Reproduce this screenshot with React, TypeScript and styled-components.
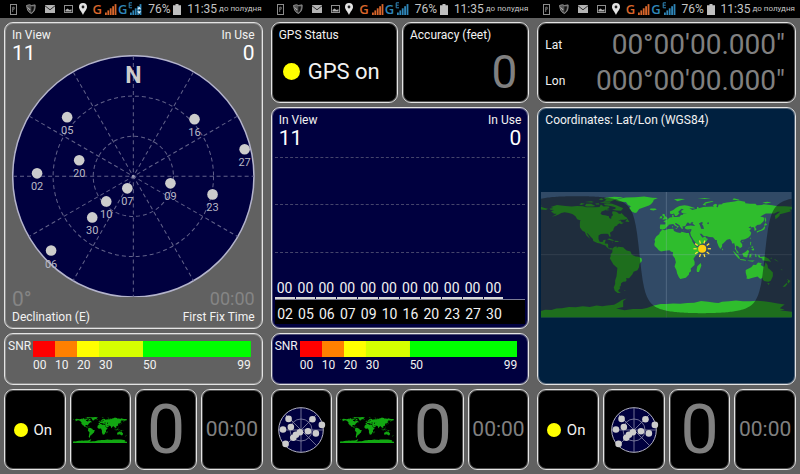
import React from "react";
import styled, { createGlobalStyle, css } from "styled-components";

const GlobalStyle = createGlobalStyle`
  *, *::before, *::after { box-sizing: border-box; }
  body { margin: 0; background: #616161; font-family: Roboto, "Noto Sans", sans-serif; color: #f2f2f2; }
`;

/* ---------- layout ---------- */

const Screens = styled.main`
  display: grid;
  grid-template-columns: repeat(3, minmax(0, 1fr));
  min-height: 100vh;
`;

const Phone = styled.section`
  display: flex;
  flex-direction: column;
  background: #616161;
`;

const Body = styled.div`
  flex: 1;
  display: flex;
  flex-direction: column;
  gap: 4px;
  padding: 4px;
`;

const frame = css`
  border: 1px solid #e4e4e4;
  border-radius: 9px;
  box-shadow: inset 0 0 0 1px rgba(220, 220, 220, 0.35);
`;

const Card = styled.div<{ $bg?: string }>`
  ${frame}
  background: ${(p) => p.$bg ?? "#000"};
  font-size: 12px;
  line-height: 14px;
`;

const Halves = styled.div`
  display: grid;
  grid-template-columns: repeat(2, minmax(0, 1fr));
  gap: 4px;
`;

const Tiles = styled.nav`
  display: grid;
  grid-template-columns: repeat(4, minmax(0, 1fr));
  gap: 4px;
`;

const Tile = styled.button`
  ${frame}
  display: flex;
  align-items: center;
  justify-content: center;
  gap: 6px;
  height: 81px;
  padding: 0;
  background: #000;
  color: #f2f2f2;
  font-family: inherit;
  font-size: 15px;
`;

const SwitchTile = styled(Tile)`
  padding-right: 4px;
`;

const Reading = styled.span<{ $size: number }>`
  color: #808080;
  font-size: ${(p) => p.$size}px;
  line-height: 1;
`;

const Dot = styled.span<{ $size: number }>`
  width: ${(p) => p.$size}px;
  height: ${(p) => p.$size}px;
  border-radius: 50%;
  background: #ffff00;
`;

/* ---------- status bar ---------- */

const StatusRow = styled.header`
  display: flex;
  align-items: center;
  justify-content: space-between;
  height: 18px;
  padding: 0 5px 0 10px;
  background: #000;
  color: #c4c4c4;
  font-size: 12px;
  line-height: 18px;
  white-space: nowrap;
`;

const Cluster = styled.div<{ $gap: number }>`
  display: flex;
  align-items: center;
  gap: ${(p) => p.$gap}px;
`;

const Carrier = styled.span<{ $color: string }>`
  color: ${(p) => p.$color};
  font-family: "Open Sans", sans-serif;
  font-size: 13px;
  font-weight: 600;
`;

const Meridiem = styled.span`
  font-size: 8px;
  line-height: 22px;
`;

function Signal({ color, edge, data }: { color: string; edge?: boolean; data?: boolean }) {
  return (
    <svg width="14" height="14" viewBox="0 0 14 14" aria-hidden="true">
      {[0, 1, 2, 3, 4].map((i) => (
        <rect key={i} x={2 + i * 2.4} y={10.5 - i * 2.1} width="1.8" height={2.5 + i * 2.1} fill={color} />
      ))}
      {edge && <path d="M4 .8H1.2v5H4M1.2 3.2h2.5" fill="none" stroke={color} strokeWidth="1" />}
      {data && <path d="M11.2 4.5l2 2.8H9.2zM11.2 12l2-2.8H9.2z" fill="#d7eefb" />}
    </svg>
  );
}

function StatusBar({ data }: { data?: boolean }) {
  return (
    <StatusRow>
      <Cluster $gap={9}>
        <svg width="7" height="11" viewBox="0 0 7 11" fill="none" stroke="#8d8d8d" aria-hidden="true">
          <rect x=".5" y=".5" width="6" height="10" />
          <path d="M2.7 8V3.2h1.5v2H2.7" strokeWidth=".8" />
        </svg>
        <svg width="10" height="10" viewBox="0 0 10 10" aria-hidden="true">
          <path d="M.5 1.5l3-.8 2 .8 3.6-.6c.3 4-.6 6.8-3.6 8.6C3 8.500 1.600 7 1.200 4.500z" fill="#555" stroke="#9a9a9a" strokeWidth=".9" />
          <path d="M5.3 2.5v5.800c1.700-1.200 2.500-3 2.600-5.900z" fill="#111" />
          <path d="M1.8 3.5l2.4 2.5" stroke="#ddd" strokeWidth=".8" />
        </svg>
        <svg width="10" height="8" viewBox="0 0 10 8" aria-hidden="true">
          <rect width="10" height="8" fill="#b4b4b4" />
          <path d="M0 .8l5 4 5-4" fill="none" stroke="#333" strokeWidth="1" />
        </svg>
        <svg width="9" height="8" viewBox="0 0 9 8" aria-hidden="true">
          <rect x=".5" y=".5" width="8" height="7" fill="none" stroke="#8f8f8f" />
          <path d="M1.5 6.5V5l2-1.5 2 1.5 2-.8v2.300z" fill="#b0b0b0" />
        </svg>
      </Cluster>
      <svg width="8" height="12" viewBox="0 0 8 12" aria-hidden="true">
        <path d="M4 0a4 4 0 0 1 4 4c0 2.600-2.600 4.500-4 8C2.600 8.500 0 6.600 0 4a4 4 0 0 1 4-4z" fill="#e4e4e4" />
        <circle cx="4" cy="4" r="1.4" fill="#222" />
      </svg>
      <Cluster $gap={1}>
        <Carrier $color="#d9662b">G</Carrier>
        <Signal color="#d9662b" />
        <Carrier $color="#2f86b8">G</Carrier>
        <Signal color="#2f86b8" edge data={data} />
      </Cluster>
      <Cluster $gap={3}>
        <span>76%</span>
        <svg width="8" height="11" viewBox="0 0 8 11" aria-hidden="true">
          <path d="M2.5 0h3v1.300H8V11H0V1.300h2.500z" fill="#c0c0c0" />
        </svg>
      </Cluster>
      <Cluster $gap={2}>
        <span>11:35</span>
        <Meridiem>до полудня</Meridiem>
      </Cluster>
    </StatusRow>
  );
}

/* ---------- satellites ---------- */

type Satellite = { id: string; x: number; y: number };

const satellites: Satellite[] = [
  { id: "02", x: -96, y: -3 },
  { id: "05", x: -66, y: -59 },
  { id: "06", x: -82, y: 74 },
  { id: "07", x: -6, y: 12 },
  { id: "09", x: 37, y: 7 },
  { id: "10", x: -27, y: 25 },
  { id: "16", x: 61, y: -57 },
  { id: "20", x: -54, y: -16 },
  { id: "23", x: 79, y: 18 },
  { id: "27", x: 111, y: -27 },
  { id: "30", x: -41, y: 41 },
];

const SkySvg = styled.svg`
  display: block;
  width: 100%;
  font-family: Roboto, sans-serif;
`;

function spoke(deg: number, r: number) {
  const a = (deg * Math.PI) / 180;
  const x = Math.cos(a) * r;
  const y = Math.sin(a) * r;
  return <line key={deg} x1={-x} y1={-y} x2={x} y2={y} />;
}

function SkyView() {
  return (
    <SkySvg viewBox="-121 -121 242 242" role="img" aria-label="Satellite positions">
      <circle r="120.3" fill="#00003f" stroke="#b4b4cc" strokeWidth="1.5" />
      <g stroke="#62628a" strokeWidth="1" strokeDasharray="4 3" fill="none">
        <circle r="40" />
        <circle r="80" />
        {[0, 30, 60, 90, 120, 150].map((d) => spoke(d, 120))}
      </g>
      <circle r="1.5" fill="#9c9cb4" />
      <text y="-93" textAnchor="middle" fontSize="23" fontWeight="700" fill="#cccccc">N</text>
      {satellites.map((s) => (
        <g key={s.id}>
          <circle cx={s.x} cy={s.y} r="5.3" fill="#cccccc" />
          <text x={s.x} y={s.y + 17} textAnchor="middle" fontSize="11" fill="#b8b8c4">{s.id}</text>
        </g>
      ))}
    </SkySvg>
  );
}

function MiniSky() {
  return (
    <svg width="50" height="50" viewBox="-25 -25 50 50" role="img" aria-label="Sky view">
      <circle r="22.3" fill="#00003f" stroke="#b4b4c4" strokeWidth="1" />
      <g stroke="#8a8aa8" strokeWidth=".8" fill="none">
        <circle r="11" />
        {[0, 45, 90, 135].map((d) => spoke(d, 22))}
      </g>
      {satellites.map((s) => (
        <circle key={s.id} cx={s.x * 0.188} cy={s.y * 0.188} r="3.3" fill="#cccccc" />
      ))}
    </svg>
  );
}

/* ---------- world map: outlines as longitude, latitude pairs ---------- */

const outlines: string[] = [
  "-168,66 -162,67 -166,68.5 -157,71.3 -145,70 -136,69 -128,70 -120,69.5 -115,68 -108,68 -102,68 -96,68.5 -94,72 -90,69 -86,69.5 -82,69 -82,67 -87,65 -87,64 -93,62 -94.5,58.8 -92,57 -88,56.5 -82.5,55 -82,52.5 -80,51.5 -79,52 -79,54.5 -76.5,57 -78,60 -77,62.5 -73,62 -70,60.5 -69,59 -66,58.5 -64.5,60 -62,57.5 -60,55 -56.5,53 -56,51.7 -60,50.2 -66,50 -69,48.5 -65,49 -64.5,46.5 -61,46 -65,43.7 -67,45 -70,43.5 -70.5,41.8 -74,40.5 -76,37 -76,35 -81,31.5 -80,27 -80.5,25.2 -81.8,26.2 -83,29 -84.5,30 -89.5,30 -94,29.5 -97.3,27.5 -97.5,23 -96,19 -94,18.2 -91,18.7 -90.3,21 -87,21.5 -88,18 -88.5,16 -84,15.8 -83.4,13 -83.7,11 -82,9 -79.5,9.5 -77.5,8.5 -78,7.5 -80,7.3 -82,8 -85.5,10.5 -87.5,13 -92,14.5 -95,16 -99,16.7 -105,19.5 -105.5,22.5 -109,26 -112.5,30 -114.7,31.5 -112.5,28 -109.5,23 -112,25 -115,28 -117,32.5 -120.5,34.5 -124,39 -124.2,43 -124,47.5 -123,49 -128,51 -130.5,55 -135,58.5 -140,60 -146,61 -151,60 -154,58 -160,55.5 -164.5,54.8 -160,56.5 -157.5,58.8 -162,58.8 -162,60 -165.5,61.5 -164,63 -161,64 -166,64.5",
  "-117,70 -115,73 -108,73 -102,70 -106,69 -114,69",
  "-125,72 -122,74.3 -117,73 -122,71.2",
  "-90,73 -85,73.7 -78,73 -72,71 -66,68.5 -62,66.5 -65,63 -72,63.5 -78,64.5 -73,66 -73,68 -80,70 -88,71",
  "-90,76.5 -80,76.3 -75,78.5 -62,82.5 -75,83 -90,81.5 -86,79",
  "-96,75 -90,76 -80,75.6 -81,74.5 -92,74.5",
  "-117,75.5 -108,76.7 -104,75.8 -107,74.8",
  "-102,73.5 -97,74 -96,72 -101,72",
  "-97,79.5 -93,81 -90,79 -94,78",
  "-87,65.5 -81,64 -86,63.3",
  "-73,78.5 -66,80.5 -58,82 -45,82.5 -32,83.5 -20,81.8 -12,81.5 -18,79 -19,76 -22,72.5 -25,70.5 -32,68 -39,65.5 -42.5,60.5 -45,60 -50,62 -53.5,66.5 -51,69.5 -55,71.5 -58,75.5 -66,76 -71,77",
  "-24,65.5 -22,66.4 -16,66.4 -13.6,65 -18.5,63.5 -22.5,64",
  "-59,47.8 -56,51.5 -53,47",
  "-85,22 -82,23.2 -77,21.5 -74.2,20.2 -78,20",
  "-74,20 -69,19.8 -68.5,18.2 -74,18.1",
  "-78.3,18.5 -76.3,18.2 -77,17.6",
  "-67,18.5 -65.5,18.5 -66,17.8",
  "-77.5,8.5 -75,11 -71.5,12.2 -71,9.5 -69,11.5 -62,10.7 -60,8.5 -57,6 -51.5,4.5 -50,1 -48,-1 -44,-2.5 -40,-3 -35.3,-5.5 -35,-9 -38.5,-13 -39.2,-18 -41.5,-22.3 -47,-24.5 -48.7,-28 -53.5,-34 -58,-34 -57,-36.5 -58,-38.5 -62,-39 -65,-41 -65.5,-45 -67.5,-46.5 -66,-48 -69,-51 -68.5,-53 -65.2,-54.8 -70,-55 -74,-52 -75.5,-47 -73.5,-42 -73.5,-37 -71.5,-31 -70.3,-19 -76,-14 -79.5,-8 -81.2,-5 -80,-2.5 -80,0.5 -77.5,3.5 -77.5,7",
  "-61,-51.3 -58,-51.5 -60,-52.3",
  "-6,35.8 -2,35 3,36.8 10,37.2 11,34 15,32.3 20,31 22,32.8 29,31 32.5,31.2 32.5,30 34,26 37,21 37.5,18.5 40,15 43,11.8 44,10.5 51,11.9 50.5,9 47.5,4 42,-1.5 39,-6 40.7,-10.5 40.5,-15 35,-20 35.5,-24 32.7,-26 32.5,-28.5 28,-33 25,-34 20,-34.8 18,-32.5 15.5,-27 14.5,-22.5 11.8,-17 13.7,-11 12.2,-5 9,-1 9.7,3.5 7,4.3 4.5,6.3 1,6 -4,5.2 -7.5,4.4 -11,6.5 -13.3,9.2 -16.7,12.5 -17.3,14.8 -16.2,19 -17,21.5 -14.5,26 -10,29.5 -9.5,32",
  "49.3,-12 50.4,-15.5 47,-25 44,-25 43.5,-22 44.5,-16.5",
  "-9,37 -9.3,39 -8.8,43.3 -1.8,43.4 -1,46 -4.5,48.4 -1.5,48.6 -1.5,49.7 2,51 5,53.2 8.5,53.8 8.2,57 10.5,57.5 10.2,55 11,54 14,54 19,54.5 21,57 24,57.2 24,59.3 30,59.8 23,60 21.5,61 21.5,63 25,65 22,65.8 17.5,62 17.2,60.5 19,60 16.5,57 14.5,55.5 12.8,55.5 11,59 8,58 5.3,59 5,62 10,64 14,67.5 19,70 26,71 31,70.3 41,67 40.5,66.3 33,66.6 37.5,64 40,64.7 44,66 44,68.3 46,68.3 46.5,66.8 53,68.5 60,68.8 66,69 68,68.3 67,71 70,73 73,72 72,68.5 74,68 75,72 80,72.5 81,73.7 87,75 98,76.3 104,77.7 113,76 113.5,73.8 120,73 128,73 130,71 137,71.5 140,72.5 152,71 160,69.7 170,69.5 180,68.8 180,65 177,64.7 179,62.5 170,60 163,58 162.5,56 160,53.2 156.7,51 156,56 163.5,61.5 160,61.8 155,59.3 143,59.3 135,54.7 141,53 140,48.5 135,43.5 130.5,42.5 127.5,39.8 129.4,37 129,35.2 126.5,34.5 126.5,37.5 125,39.7 121.5,39 121.5,40.8 118,39 122.3,37.2 119.3,35 122,31.5 121,28 118,24.5 113,22 109.5,21.5 108.5,21.7 106,19 109,15 109,11.5 105,8.7 105,10.5 102.5,12 101,13.3 99.5,11 100.5,7.5 103.5,4 104,1.3 101,3 100.3,6 98.3,8 98.7,12 97.5,16.5 94.3,16 94,19 91.5,22.5 87,21.5 82,16.5 80.2,15 80,11.5 77.5,8 75,12 72.8,18 72.5,21 70.3,21 67,25 61.5,25.2 57,26.8 54,26.6 50.5,30 48,30 50.2,26.5 51.5,25 51.5,24.2 56.3,26 57,24 59.8,22.5 57,18.5 52,16 45,12.8 43,13 42.5,16.5 39,21 35,28 34.8,29.5 34.2,31.3 36,35 36,36.7 31,36.3 27.5,36.8 26.5,39.5 29,41 35,42 41.5,41.3 37.5,45 39,47 35,46.3 36,45.2 33.5,44.5 31,46.5 28.7,44 28,41.8 26,40.8 23,40.3 24,38 22.7,36.5 19.5,40.5 19,42.3 13.7,45.5 12.4,44.5 14,42.5 18.4,40.2 16.5,39.8 17,39 15.8,38 15.5,40 12.3,41.7 10,44 7.5,43.8 3.2,43 3.2,41.8 0,39 -2,36.8 -5.5,36.1",
  "47,45 51,47 53,45.5 51,44 53,41 54,37 50,37.3 49,40.5",
  "58.5,45 60,46.5 61.5,45.5 60,43.8",
  "-5.5,50 1.4,51.2 1.6,52.8 -2,56 -2,57.6 -5,58.6 -6,56.5 -3,54 -5,52",
  "-10,52 -6,52.3 -6,55 -8.5,55",
  "8.5,41 9.5,41 9.5,39 8.5,39",
  "12.5,38 15.5,38.2 15,36.8",
  "24,35.5 26,35.2 24,35",
  "32.5,35 34.3,35.5 33,34.6",
  "11,79.5 16,76.7 22,78.5 27,80 18,80.2",
  "45,80.5 55,81.3 64,80.8 55,80",
  "52,71.5 57,70.7 56,73 68,76.5 66,77 56,75.3",
  "95,79 103,78.3 105,79 97,81.2",
  "138,75 145,76 151,75 143,73.5",
  "-180,71.3 -177.5,71.2 -180,70.8",
  "178.5,71.2 180,71.4 180,70.8",
  "-180,68.8 -175,67 -170,66 -173,64.3 -180,65",
  "130,31.5 130,33.5 136,35.7 139,38 141,41.3 142,39.5 140.8,36 137,34.5 133.5,33.3",
  "140,42 142,45.5 145,43.5 143,42",
  "142,46 143.5,49.5 142.5,54 141.5,51",
  "120.2,23.5 121.8,25 121,22",
  "108.7,19.3 111,20 110,18.2",
  "79.8,9.5 81.8,7 80.3,6",
  "120.5,18.5 122,18.3 121.5,14 124,12.7 120.5,14",
  "122,7 125.5,9.7 126.3,6.5 124,6",
  "122,11.5 125,12 124.5,10 122.5,9.5",
  "117.3,8.5 119.5,11 119,9.5",
  "95.3,5.6 98,4 104,-2 106,-5.8 104,-5.8 100,-1.5",
  "105.3,-6.3 110.5,-6.5 114.5,-7.8 114,-8.6 106.5,-7.7",
  "109,1.5 113,3.5 117,7 119,5 117.5,1 116,-4 111,-3",
  "120,-5.5 119,-2.5 120,1 125,1.5 121,0.3 123,-1 121.5,-2 122.5,-5 121,-3",
  "116,-8.3 123,-8.3 127,-8.5 124,-10 118,-9",
  "128,1.5 129,0 130,-3 127.5,-3",
  "131,-1 134,-1 135,-3.3 141,-2.6 147,-6 150.5,-10.5 147,-9.5 143,-9 138,-8.2 138,-5.5 133,-4",
  "149,-5.6 152,-4 151,-6",
  "155,-6 160,-9 161,-10 156,-7.5",
  "164,-20.2 167,-22 166,-22.3",
  "114,-22 114,-26 115.7,-32 115,-34.3 118,-35 124,-33 131,-31.5 135,-34.8 138,-33 138.5,-35.5 140.5,-38 144,-38.5 146.5,-39 150,-37.3 153,-31 153,-25.5 149.5,-22 146,-19 145.3,-15 142.5,-10.8 141,-16.5 139.5,-17.5 135.5,-15 137,-12.2 132,-11.3 130,-13 129,-15 125,-14.5 122,-18",
  "144.8,-40.8 148.3,-41 147,-43.5",
  "173,-34.5 178.3,-37.8 175,-41.5 174,-39 175,-37",
  "172.7,-40.6 174,-42 170.5,-46 167,-46",
  "-180,-81 -174,-79 -165,-79.5 -158,-77.5 -150,-77 -140,-75 -130,-75.5 -120,-74 -110,-75 -100,-73 -92,-74 -85,-73 -75,-72 -68,-68 -64,-65 -57,-63 -62,-66.5 -62,-72 -62,-75 -72,-77.5 -60,-80 -48,-78 -35,-78 -28,-76.5 -18,-73 -8,-71 0,-71 10,-70 20,-70.5 30,-69.5 40,-69 50,-66.5 60,-67.5 70,-69 75,-69.5 80,-67.5 90,-67 100,-66 110,-67 120,-67 130,-66.3 140,-67 150,-68.5 160,-70 170,-71.5 165,-75 163,-77 170,-79 163,-80 180,-82 180,-90 -180,-90",
];

const landPath = outlines
  .map((line) => {
    const pts = line.split(" ").map((pair) => {
      const [lon, lat] = pair.split(",").map(Number);
      return `${lon} ${-lat}`;
    });
    return `M${pts.join("L")}Z`;
  })
  .join("");

const sun = { lon: 51.5, lat: 8.5, declination: 6 };

function nightPath() {
  const tan = Math.tan((sun.declination * Math.PI) / 180);
  const pts: string[] = [];
  for (let lon = -180; lon <= 180; lon += 2) {
    const hour = ((lon - sun.lon) * Math.PI) / 180;
    const lat = (Math.atan(-Math.cos(hour) / tan) * 180) / Math.PI;
    pts.push(`${lon} ${(-lat).toFixed(2)}`);
  }
  return `M-180 90L${pts.join("L")}L180 90Z`;
}

const MapSvg = styled.svg`
  display: block;
  width: 100%;
`;

function WorldMap() {
  return (
    <MapSvg viewBox="-180 -90 360 180" role="img" aria-label="World map">
      <rect x="-180" y="-90" width="360" height="180" fill="#314a66" />
      <path d={landPath} fill="#2fbd2d" fillRule="evenodd" />
      <path d="M-180 0H180M0 -90V90" stroke="#a0b4c8" strokeOpacity=".3" strokeWidth="1.4" />
      <path d={nightPath()} fill="#0a0a08" fillOpacity=".44" />
      <g transform={`translate(${sun.lon} ${-sun.lat})`}>
        {[0, 1, 2, 3, 4, 5, 6, 7, 8, 9].map((i) => (
          <line key={i} y1="-8" y2="-12.5" stroke="#ffe03a" strokeWidth="1.8" transform={`rotate(${i * 36 + 18})`} />
        ))}
        <circle r="5.8" fill="#ffcf10" />
      </g>
    </MapSvg>
  );
}

function MiniMap() {
  return (
    <svg width="54" height="27" viewBox="-180 -90 360 180" role="img" aria-label="Map">
      <path d={landPath} fill="#12a812" fillRule="evenodd" />
    </svg>
  );
}

/* ---------- cards ---------- */

const Corners = styled.div`
  display: flex;
  justify-content: space-between;
`;

const Stat = styled.div<{ $right?: boolean }>`
  display: flex;
  flex-direction: column;
  align-items: ${(p) => (p.$right ? "flex-end" : "flex-start")};
`;

const Value = styled.span<{ $dim?: boolean; $size?: number }>`
  color: ${(p) => (p.$dim ? "#858585" : "#ffffff")};
  font-size: ${(p) => p.$size ?? 21}px;
  line-height: 22px;
`;

const SkyCard = styled(Card)`
  flex: 1;
  display: grid;
  padding: 5px 7px 4px;

  > * { grid-area: 1 / 1; }
  > :nth-child(1) { align-self: center; }
  > :nth-child(3) { align-self: end; }
`;

function Counts() {
  return (
    <Corners>
      <Stat>
        <span>In View</span>
        <Value>11</Value>
      </Stat>
      <Stat $right>
        <span>In Use</span>
        <Value>0</Value>
      </Stat>
    </Corners>
  );
}

const SnrCard = styled(Card)`
  display: grid;
  grid-template-columns: auto minmax(0, 1fr);
  gap: 2px;
  height: 52px;
  padding: 7px 11px 0 3px;
`;

const SnrTitle = styled.span`
  line-height: 10px;
`;

const Scale = styled.div`
  display: grid;
  grid-template-columns: 10fr 10fr 10fr 20fr 49fr;
`;

const Band = styled.div<{ $color: string }>`
  display: flex;
  justify-content: space-between;
  height: 32px;
  padding-top: 17px;
  background: linear-gradient(${(p) => p.$color}, ${(p) => p.$color}) top / 100% 16px no-repeat;
`;

function Snr({ bg }: { bg: string }) {
  return (
    <SnrCard $bg={bg}>
      <SnrTitle>SNR</SnrTitle>
      <Scale>
        <Band $color="#ff0000">00</Band>
        <Band $color="#ff8000">10</Band>
        <Band $color="#ffff00">20</Band>
        <Band $color="#d5ff00">30</Band>
        <Band $color="#00ff00">
          <span>50</span>
          <span>99</span>
        </Band>
      </Scale>
    </SnrCard>
  );
}

const StatusCard = styled(Card)`
  display: flex;
  flex-direction: column;
  height: 81px;
  padding: 5px 7px;
`;

const BigRow = styled.div<{ $right?: boolean }>`
  flex: 1;
  display: flex;
  align-items: center;
  justify-content: ${(p) => (p.$right ? "flex-end" : "flex-start")};
  gap: 8px;
  padding: 4px 4px 0;
  font-size: 22px;
`;

const ChartCard = styled(Card)`
  flex: 1;
  display: flex;
  flex-direction: column;
  padding: 5px 3px 4px;
`;

const ChartHead = styled.div`
  padding: 0 4px;
`;

const Plot = styled.div`
  flex: 1;
  display: flex;
  flex-direction: column;
  margin-top: 8px;
`;

const PlotBand = styled.div`
  flex: 1;
  border-top: 1px dashed #45456c;
`;

const Columns = styled.div`
  display: grid;
  grid-template-columns: repeat(12, minmax(0, 1fr));
  font-size: 14px;
  line-height: 18px;
  text-align: center;
`;

const Levels = styled(Columns)`
  margin-top: -20px;
`;

const Axis = styled(Columns)`
  padding: 5px 0 1px;
  background: #000;
  border-top: 1px solid #7c7c94;
`;

const Level = styled.span`
  margin-right: 1px;
  border-bottom: 2px solid #d8d8d8;
`;

const CoordCard = styled(Card)`
  display: flex;
  flex-direction: column;
  justify-content: center;
  gap: 8px;
  height: 81px;
  padding: 0 10px 0 7px;
`;

const CoordRow = styled.div`
  display: flex;
  align-items: center;
  justify-content: space-between;
`;

const MapCard = styled(Card)`
  flex: 1;
  display: flex;
  flex-direction: column;
  padding: 5px 3px;
`;

const MapTitle = styled.span`
  padding: 0 4px;
`;

const MapArea = styled.div`
  flex: 1;
  display: flex;
  align-items: center;
  padding-top: 4px;
`;

function OnTile() {
  return (
    <SwitchTile type="button">
      <Dot $size={14} />
      <span>On</span>
    </SwitchTile>
  );
}

function TailTiles() {
  return (
    <>
      <Tile type="button"><Reading $size={68}>0</Reading></Tile>
      <Tile type="button"><Reading $size={21}>00:00</Reading></Tile>
    </>
  );
}

export default function App() {
  return (
    <>
      <GlobalStyle />
      <Screens>
        <Phone>
          <StatusBar data />
          <Body>
            <SkyCard $bg="#616161">
              <SkyView />
              <Counts />
              <Corners>
                <Stat>
                  <Value $dim>0°</Value>
                  <span>Declination (E)</span>
                </Stat>
                <Stat $right>
                  <Value $dim $size={18}>00:00</Value>
                  <span>First Fix Time</span>
                </Stat>
              </Corners>
            </SkyCard>
            <Snr bg="#616161" />
            <Tiles>
              <OnTile />
              <Tile type="button"><MiniMap /></Tile>
              <TailTiles />
            </Tiles>
          </Body>
        </Phone>

        <Phone>
          <StatusBar />
          <Body>
            <Halves>
              <StatusCard>
                <span>GPS Status</span>
                <BigRow>
                  <Dot $size={17} />
                  <span>GPS on</span>
                </BigRow>
              </StatusCard>
              <StatusCard>
                <span>Accuracy (feet)</span>
                <BigRow $right>
                  <Reading $size={46}>0</Reading>
                </BigRow>
              </StatusCard>
            </Halves>
            <ChartCard $bg="#00003f">
              <ChartHead><Counts /></ChartHead>
              <Plot>
                <PlotBand />
                <PlotBand />
                <PlotBand />
              </Plot>
              <Levels>
                {satellites.map((s) => <Level key={s.id}>00</Level>)}
              </Levels>
              <Axis>
                {satellites.map((s) => <span key={s.id}>{s.id}</span>)}
              </Axis>
            </ChartCard>
            <Snr bg="#00003f" />
            <Tiles>
              <Tile type="button"><MiniSky /></Tile>
              <Tile type="button"><MiniMap /></Tile>
              <TailTiles />
            </Tiles>
          </Body>
        </Phone>

        <Phone>
          <StatusBar />
          <Body>
            <CoordCard>
              <CoordRow>
                <span>Lat</span>
                <Reading $size={28}>00°00'00.000"</Reading>
              </CoordRow>
              <CoordRow>
                <span>Lon</span>
                <Reading $size={28}>000°00'00.000"</Reading>
              </CoordRow>
            </CoordCard>
            <MapCard $bg="#00203f">
              <MapTitle>Coordinates: Lat/Lon (WGS84)</MapTitle>
              <MapArea><WorldMap /></MapArea>
            </MapCard>
            <Tiles>
              <OnTile />
              <Tile type="button"><MiniSky /></Tile>
              <TailTiles />
            </Tiles>
          </Body>
        </Phone>
      </Screens>
    </>
  );
}
